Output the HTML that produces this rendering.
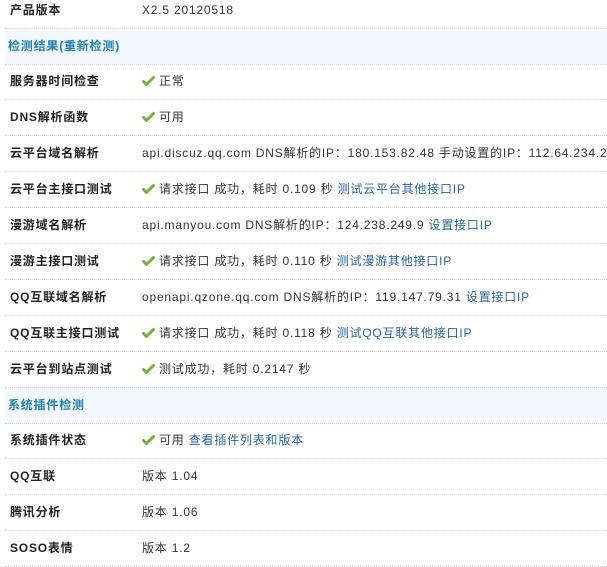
<!DOCTYPE html>
<html><head><meta charset="utf-8"><style>
body{margin:0;background:#fff;font-family:"Liberation Sans","Noto Sans CJK SC",sans-serif;font-size:12px;color:#333;width:607px;height:553px;overflow:hidden;position:relative;letter-spacing:0.8px}
.r{position:absolute;left:5px;width:602px;height:35px;border-bottom:1px dotted #d6d6d6;line-height:35px;white-space:nowrap}
.l{position:absolute;left:5px;font-weight:bold;color:#222}
.v{position:absolute;left:137px}
.h{background:#f2f8fd;color:#1f7fb0;font-weight:bold;padding-left:3px;border-bottom:1px dotted #d6d6d6}
a{color:#2366a8;text-decoration:none}
.c{display:inline-block;width:13px;height:11px;vertical-align:-1px;margin-right:4px}
</style></head><body>
<svg width="0" height="0" style="position:absolute"><defs><symbol id="ck" viewBox="0 0 13 11"><path d="M1.5 6.5 L4.5 9.5 L11.5 2.5" stroke="#6fb432" stroke-width="3" fill="none" stroke-linecap="round" stroke-linejoin="round"/></symbol></defs></svg>
<div class="r" style="top:-7px"><span class="l">产品版本</span><span class="v">X2.5 20120518</span></div>
<div class="r h" style="top:29px;width:599px">检测结果(重新检测)</div>
<div class="r" style="top:64px"><span class="l">服务器时间检查</span><span class="v"><svg class="c"><use href="#ck"/></svg>正常</span></div>
<div class="r" style="top:100px"><span class="l">DNS解析函数</span><span class="v"><svg class="c"><use href="#ck"/></svg>可用</span></div>
<div class="r" style="top:136px"><span class="l">云平台域名解析</span><span class="v">api.discuz.qq.com DNS解析的IP：180.153.82.48 手动设置的IP：112.64.234.2</span></div>
<div class="r" style="top:172px"><span class="l">云平台主接口测试</span><span class="v"><svg class="c"><use href="#ck"/></svg>请求接口 成功，耗时 0.109 秒 <a>测试云平台其他接口IP</a></span></div>
<div class="r" style="top:208px"><span class="l">漫游域名解析</span><span class="v">api.manyou.com DNS解析的IP：124.238.249.9 <a>设置接口IP</a></span></div>
<div class="r" style="top:244px"><span class="l">漫游主接口测试</span><span class="v"><svg class="c"><use href="#ck"/></svg>请求接口 成功，耗时 0.110 秒 <a>测试漫游其他接口IP</a></span></div>
<div class="r" style="top:280px"><span class="l">QQ互联域名解析</span><span class="v">openapi.qzone.qq.com DNS解析的IP：119.147.79.31 <a>设置接口IP</a></span></div>
<div class="r" style="top:316px"><span class="l">QQ互联主接口测试</span><span class="v"><svg class="c"><use href="#ck"/></svg>请求接口 成功，耗时 0.118 秒 <a>测试QQ互联其他接口IP</a></span></div>
<div class="r" style="top:352px"><span class="l">云平台到站点测试</span><span class="v"><svg class="c"><use href="#ck"/></svg>测试成功，耗时 0.2147 秒</span></div>
<div class="r h" style="top:388px;width:599px">系统插件检测</div>
<div class="r" style="top:423px"><span class="l">系统插件状态</span><span class="v"><svg class="c"><use href="#ck"/></svg>可用 <a>查看插件列表和版本</a></span></div>
<div class="r" style="top:459px"><span class="l">QQ互联</span><span class="v">版本 1.04</span></div>
<div class="r" style="top:495px"><span class="l">腾讯分析</span><span class="v">版本 1.06</span></div>
<div class="r" style="top:531px"><span class="l">SOSO表情</span><span class="v">版本 1.2</span></div>
</body></html>
